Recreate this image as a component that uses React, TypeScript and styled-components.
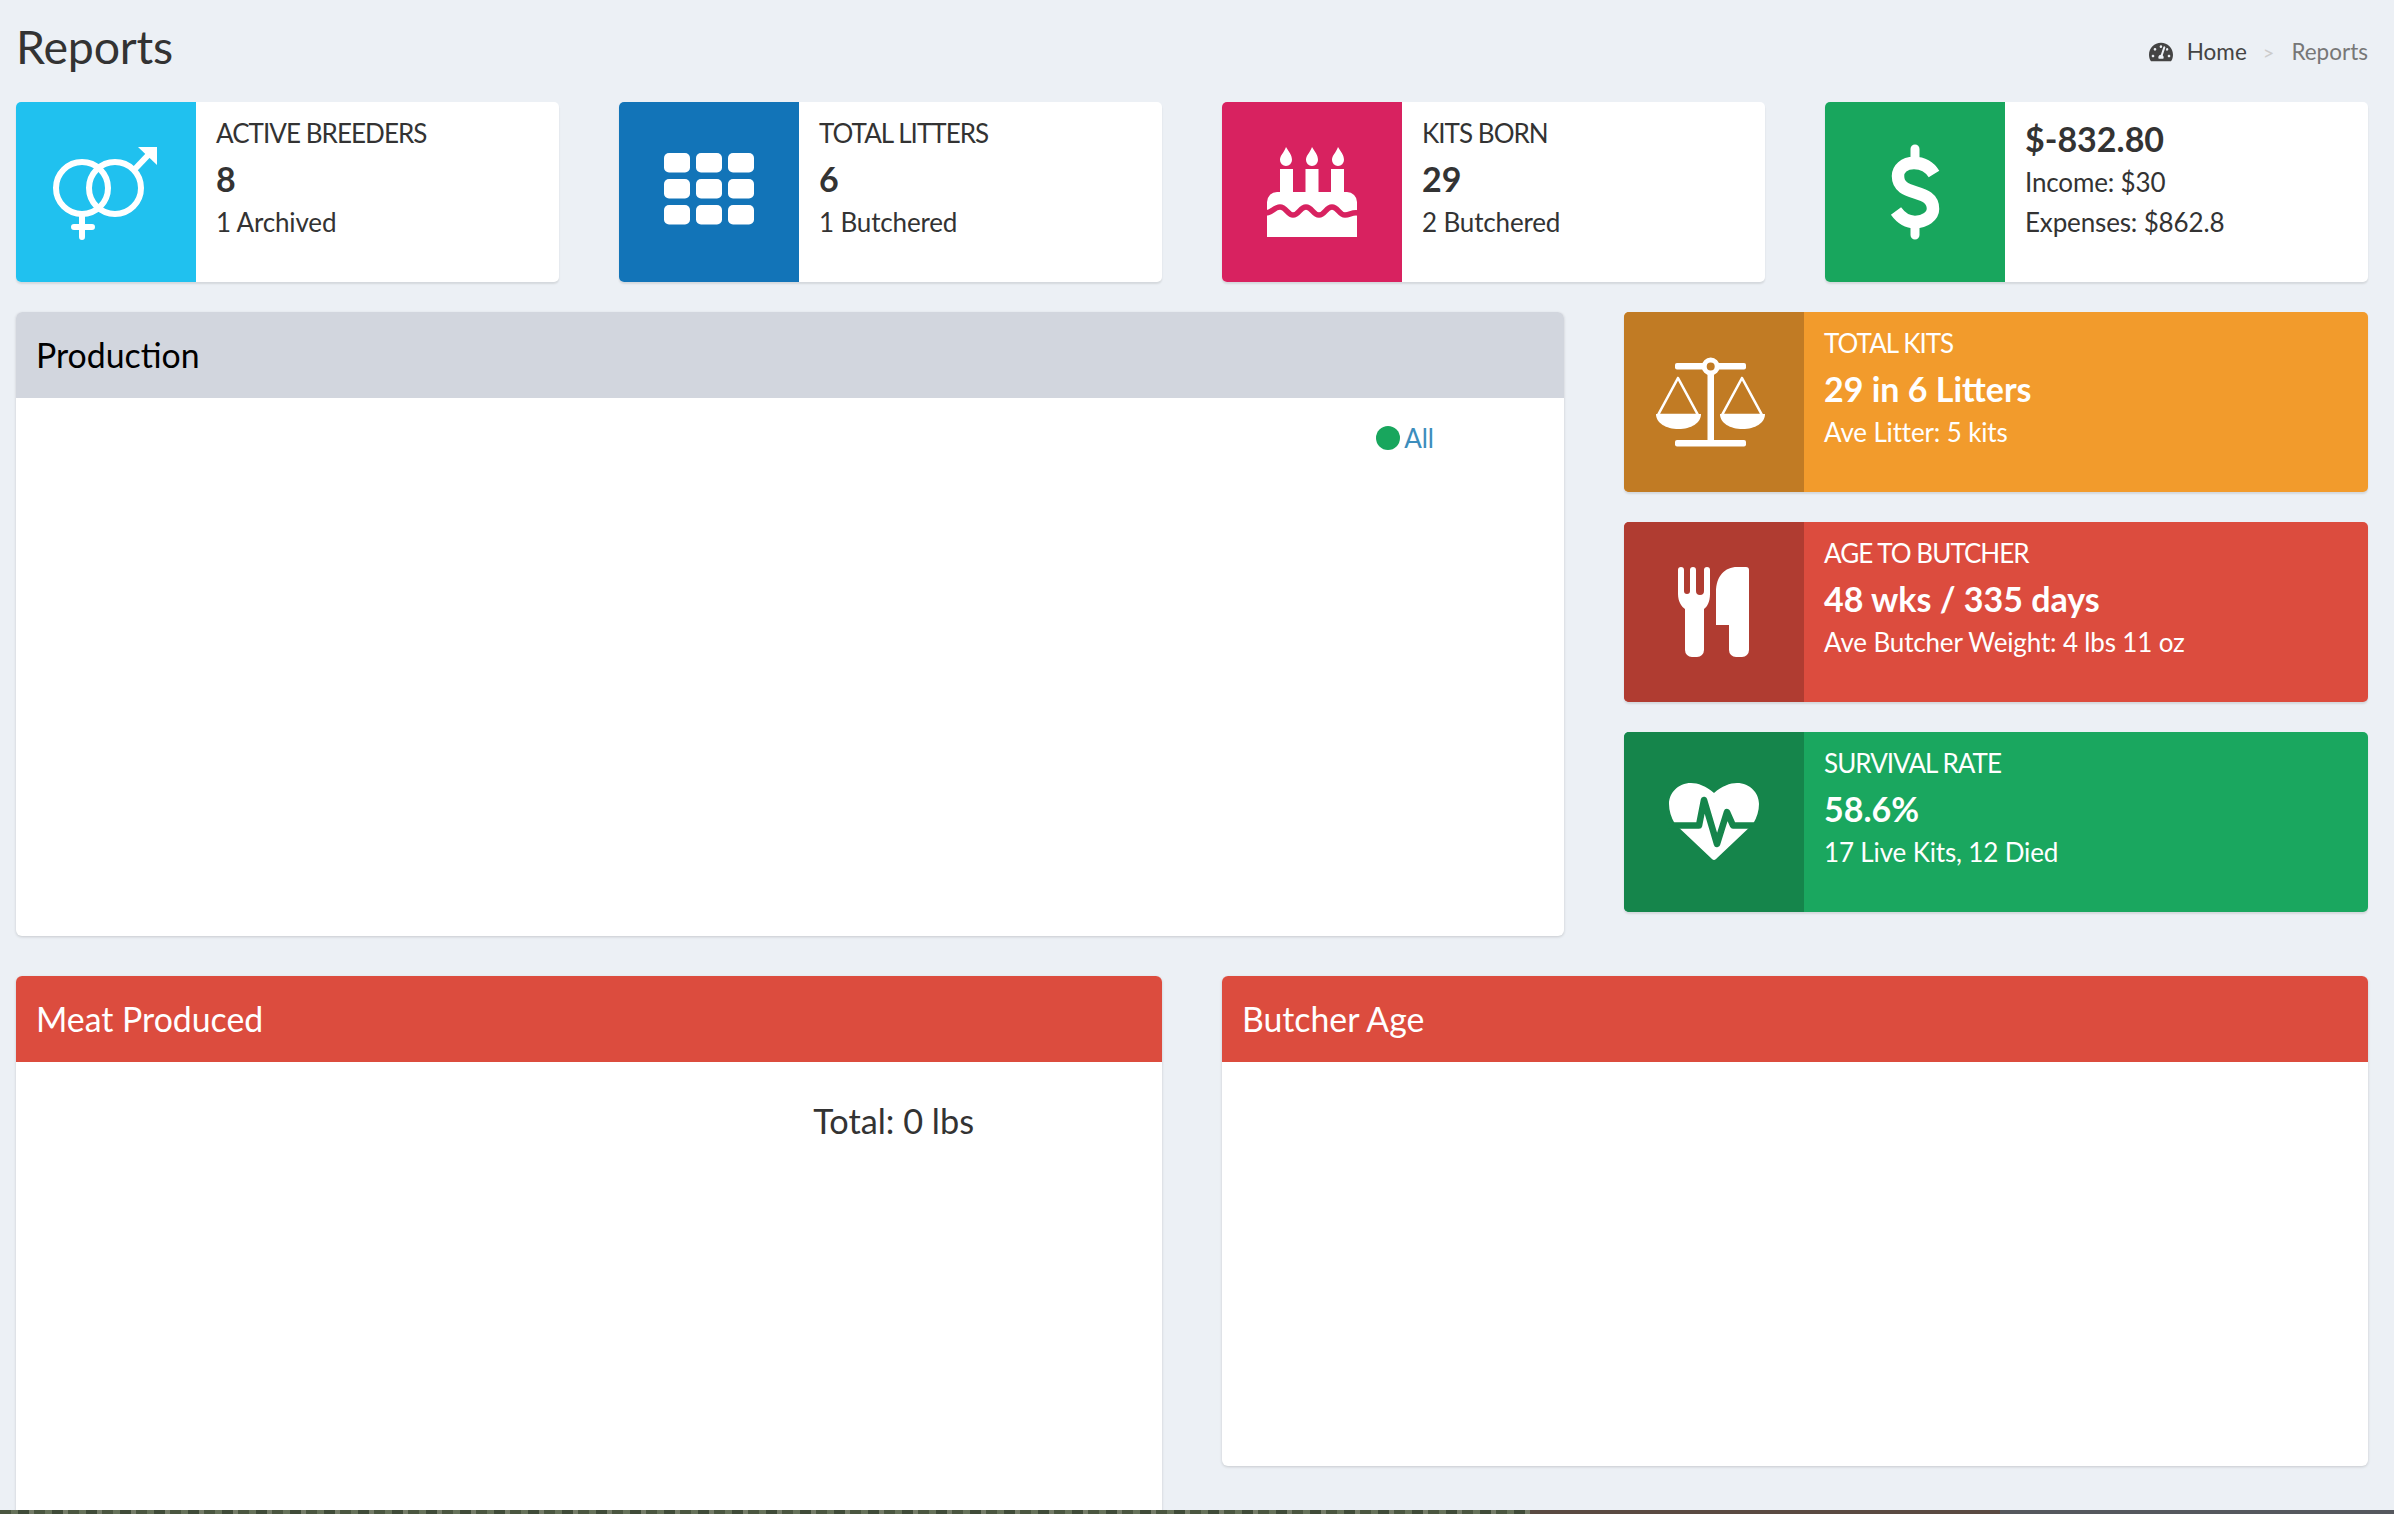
import styled, { createGlobalStyle } from "styled-components";
import { FaTachometerAlt } from "react-icons/fa";
import type { ReactNode } from "react";

const Global = createGlobalStyle`
  html, body {
    margin: 0;
    padding: 0;
    height: 100%;
    overflow: hidden;
    background: #ecf0f5;
  }
  body {
    font-family: "Lato", "Open Sans", sans-serif;
    color: #333;
  }
`;

const Page = styled.div`
  height: 1514px;
  display: flex;
  flex-direction: column;
  overflow: hidden;
`;

const Content = styled.main`
  flex: 1;
  min-height: 0;
  overflow: hidden;
  padding: 0 26px 0 16px;
  display: flex;
  flex-direction: column;
`;

const Header = styled.header`
  height: 102px;
  flex: none;
  display: flex;
  justify-content: space-between;
  align-items: flex-start;
`;

const Title = styled.h1`
  margin: 17px 0 0;
  font-size: 46.5px;
  line-height: 58px;
  font-weight: 400;
  letter-spacing: -0.2px;
  color: #333;
`;

const Crumbs = styled.ol`
  list-style: none;
  margin: 37px 0 0;
  padding: 0;
  display: flex;
  align-items: center;
  font-size: 22.5px;
  line-height: 30px;
`;

const Crumb = styled.li<{ $active?: boolean }>`
  display: flex;
  align-items: center;
  gap: 14px;
  color: ${({ $active }) => ($active ? "#777" : "#444")};
`;

const Separator = styled.span`
  color: #ccc;
  font-size: 20px;
  margin: 0 17px 0 16px;
`;

const TopRow = styled.section`
  flex: none;
  display: grid;
  grid-template-columns: repeat(4, 543px);
  gap: 60px;
  margin-bottom: 30px;
`;

const InfoBox = styled.article<{ $bg: string }>`
  height: 180px;
  display: flex;
  border-radius: 5px;
  overflow: hidden;
  background: ${({ $bg }) => $bg};
  box-shadow: 0 2px 2px rgba(0, 0, 0, 0.1);
`;

const IconBox = styled.div<{ $bg: string }>`
  flex: none;
  width: 180px;
  height: 180px;
  background: ${({ $bg }) => $bg};

  svg {
    display: block;
    width: 180px;
    height: 180px;
  }
`;

const InfoBody = styled.div<{ $light?: boolean }>`
  flex: 1;
  min-width: 0;
  padding: 10.5px 20px 0;
  color: ${({ $light }) => ($light ? "#fff" : "#333")};
`;

const InfoLabel = styled.div`
  font-size: 26px;
  line-height: 40px;
  letter-spacing: -0.95px;
`;

const InfoNumber = styled.div<{ $lead?: boolean }>`
  font-size: 34px;
  font-weight: 700;
  line-height: 47.5px;
  margin-top: 2px;
`;

const InfoText = styled.div`
  font-size: 26px;
  line-height: 40px;
  letter-spacing: -0.15px;
`;

const MiddleRow = styled.section`
  flex: none;
  display: grid;
  grid-template-columns: 1548px 744px;
  gap: 60px;
  margin-bottom: 40px;
`;

const SideColumn = styled.div`
  display: flex;
  flex-direction: column;
  gap: 30px;
`;

const BottomRow = styled.section`
  flex: 1;
  min-height: 0;
  display: grid;
  grid-template-columns: 1146px 1146px;
  gap: 60px;
  align-items: start;
`;

const Panel = styled.section<{ $height: number }>`
  height: ${({ $height }) => $height}px;
  background: #fff;
  border-radius: 6px;
  overflow: hidden;
  box-shadow: 0 1px 3px rgba(0, 0, 0, 0.16);
`;

const PanelHead = styled.h3<{ $bg: string; $color: string }>`
  margin: 0;
  height: 86px;
  padding: 0 20px;
  display: flex;
  align-items: center;
  font-size: 33.8px;
  font-weight: 400;
  background: ${({ $bg }) => $bg};
  color: ${({ $color }) => $color};
`;

const Legend = styled.div`
  display: flex;
  align-items: center;
  justify-content: flex-end;
  gap: 4px;
  padding: 22px 130px 0 0;
  font-size: 26px;
  line-height: 36px;
  color: #3c8dbc;
`;

const LegendDot = styled.span`
  width: 24px;
  height: 24px;
  border-radius: 50%;
  background: #18a65d;
`;

const MeatTotal = styled.div`
  padding: 36px 188px 0 0;
  text-align: right;
  font-size: 34.3px;
  line-height: 46px;
  color: #333;
`;

const PhotoStrip = styled.div`
  flex: none;
  height: 4px;
  background:
    linear-gradient(90deg, transparent 0 1530px, #5a4a42 1530px 2000px, #55585e 2000px),
    repeating-linear-gradient(90deg, #4a5640 0 11px, #66725a 11px 18px, #3f4b38 18px 29px, #747c68 29px 34px);
`;

function Venus() {
  return (
    <svg viewBox="0 0 180 180" fill="none" stroke="#fff" strokeWidth="6">
      <circle cx="66" cy="86" r="26" />
      <circle cx="99" cy="86" r="26" />
      <path d="M66 113V135M58 125H76" strokeLinecap="round" />
      <path d="M118 68L137 48" />
      <path d="M122 45H141V63Z" fill="#fff" strokeWidth="0" />
    </svg>
  );
}

function Grid() {
  const cells = [];
  for (const y of [51, 77, 103]) {
    for (const x of [45, 77, 109]) {
      cells.push(<rect key={`${x}-${y}`} x={x} y={y} width="26" height="19.5" rx="5" />);
    }
  }
  return (
    <svg viewBox="0 0 180 180" fill="#fff">
      {cells}
    </svg>
  );
}

function Cake({ bg }: { bg: string }) {
  const flame = (x: number) =>
    `M${x} 45C${x + 3} 50 ${x + 6} 53 ${x + 6} 58A6 6 0 0 1 ${x - 6} 58C${x - 6} 53 ${x - 2} 51 ${x} 45Z`;
  return (
    <svg viewBox="0 0 180 180" fill="#fff">
      <path d={flame(64)} />
      <path d={flame(90)} />
      <path d={flame(116)} />
      <rect x="58" y="67" width="13" height="24" />
      <rect x="83.5" y="67" width="13" height="24" />
      <rect x="109" y="67" width="13" height="24" />
      <path d="M45 100A10 10 0 0 1 55 90H125A10 10 0 0 1 135 100V135H45Z" />
      <path
        d="M44 111C50 111 52 105 58 105C64 105 66 113 71 113C77 113 78 105 84 105C90 105 91 113 97 113C103 113 104 105 110 105C116 105 117 113 123 113C128 113 130 110 136 111"
        fill="none"
        stroke={bg}
        strokeWidth="5.5"
      />
    </svg>
  );
}

function Dollar() {
  return (
    <svg viewBox="0 0 180 180" fill="none" stroke="#fff">
      <path d="M90 47V60M90 120V133" strokeWidth="9" strokeLinecap="round" />
      <path
        d="M109 72C104 64 97 61 89 61C79 61 73 67 73 74C73 96 108 85 108 107C108 114 100 120 90 120C82 120 76 116 71 109"
        strokeWidth="12.5"
      />
    </svg>
  );
}

function Scale() {
  return (
    <svg viewBox="0 0 180 180" fill="#fff">
      <rect x="51" y="51" width="71" height="6.5" rx="2" />
      <rect x="51" y="128" width="71" height="6.5" rx="2" />
      <rect x="83.5" y="55" width="6.5" height="75" />
      <circle cx="86.7" cy="54.5" r="6.5" stroke="#fff" strokeWidth="5" fill="#c17b24" />
      <path d="M54 66L34 103H74Z" fill="none" stroke="#fff" strokeWidth="2.6" strokeLinejoin="round" />
      <path d="M118 66L98 103H138Z" fill="none" stroke="#fff" strokeWidth="2.6" strokeLinejoin="round" />
      <path d="M32 102H77C77 111 67 117 54.5 117C42 117 32 111 32 102Z" />
      <path d="M96 102H141C141 111 131 117 118.5 117C106 117 96 111 96 102Z" />
    </svg>
  );
}

function Utensils() {
  return (
    <svg viewBox="0 0 180 180" fill="#fff">
      <path d="M54 48A3 3 0 0 1 60 48V69A3 3 0 0 0 66 69V48A3 3 0 0 1 72 48V69A3 3 0 0 0 80 69V48A3 3 0 0 1 86 48V72C86 80 83 85 80 87V128A7 7 0 0 1 73 135H68A7 7 0 0 1 61 128V87C58 85 54 80 54 72Z" />
      <path d="M92 103V70C92 54 101 45 113 45H122A3 3 0 0 1 125 48V128A7 7 0 0 1 118 135H112A7 7 0 0 1 105 128V103Z" />
    </svg>
  );
}

function Heart({ bg }: { bg: string }) {
  return (
    <svg viewBox="0 0 180 180" fill="#fff">
      <path d="M90 61C82 54 74 51 67 51C54 51 45 61 45 72C45 79 47 85 51 92L88 127Q90 129 92 127L129 92C133 85 135 79 135 72C135 61 126 51 113 51C106 51 98 54 90 61Z" />
      <path
        d="M44 93.5H75L80 68L93 112L103 80L109 93.5H136"
        fill="none"
        stroke={bg}
        strokeWidth="6.5"
        strokeLinejoin="round"
      />
    </svg>
  );
}

interface StatProps {
  bg: string;
  iconBg: string;
  icon: ReactNode;
  label: string;
  value: string;
  text: string;
  light?: boolean;
}

function Stat({ bg, iconBg, icon, label, value, text, light }: StatProps) {
  return (
    <InfoBox $bg={bg}>
      <IconBox $bg={iconBg}>{icon}</IconBox>
      <InfoBody $light={light}>
        <InfoLabel>{label}</InfoLabel>
        <InfoNumber>{value}</InfoNumber>
        <InfoText>{text}</InfoText>
      </InfoBody>
    </InfoBox>
  );
}

export default function App() {
  return (
    <Page>
      <Global />
      <Content>
        <Header>
          <Title>Reports</Title>
          <Crumbs>
            <Crumb>
              <FaTachometerAlt size={24} />
              Home
            </Crumb>
            <Separator>&gt;</Separator>
            <Crumb $active>Reports</Crumb>
          </Crumbs>
        </Header>

        <TopRow>
          <Stat bg="#fff" iconBg="#20c1ef" icon={<Venus />} label="ACTIVE BREEDERS" value="8" text="1 Archived" />
          <Stat bg="#fff" iconBg="#1274b8" icon={<Grid />} label="TOTAL LITTERS" value="6" text="1 Butchered" />
          <Stat bg="#fff" iconBg="#d82260" icon={<Cake bg="#d82260" />} label="KITS BORN" value="29" text="2 Butchered" />
          <InfoBox $bg="#fff">
            <IconBox $bg="#18a65d">
              <Dollar />
            </IconBox>
            <InfoBody>
              <InfoNumber>$-832.80</InfoNumber>
              <InfoText>Income: $30</InfoText>
              <InfoText>Expenses: $862.8</InfoText>
            </InfoBody>
          </InfoBox>
        </TopRow>

        <MiddleRow>
          <Panel $height={624}>
            <PanelHead $bg="#d2d6de" $color="#000">Production</PanelHead>
            <Legend>
              <LegendDot />
              All
            </Legend>
          </Panel>
          <SideColumn>
            <Stat light bg="#f29b2c" iconBg="#c17b24" icon={<Scale />} label="TOTAL KITS" value="29 in 6 Litters" text="Ave Litter: 5 kits" />
            <Stat light bg="#dc4c3e" iconBg="#b03c31" icon={<Utensils />} label="AGE TO BUTCHER" value="48 wks / 335 days" text="Ave Butcher Weight: 4 lbs 11 oz" />
            <Stat light bg="#1aa75f" iconBg="#15854b" icon={<Heart bg="#15854b" />} label="SURVIVAL RATE" value="58.6%" text="17 Live Kits, 12 Died" />
          </SideColumn>
        </MiddleRow>

        <BottomRow>
          <Panel $height={560}>
            <PanelHead $bg="#dc4c3e" $color="#fff">Meat Produced</PanelHead>
            <MeatTotal>Total: 0 lbs</MeatTotal>
          </Panel>
          <Panel $height={490}>
            <PanelHead $bg="#dc4c3e" $color="#fff">Butcher Age</PanelHead>
          </Panel>
        </BottomRow>
      </Content>
      <PhotoStrip />
    </Page>
  );
}
